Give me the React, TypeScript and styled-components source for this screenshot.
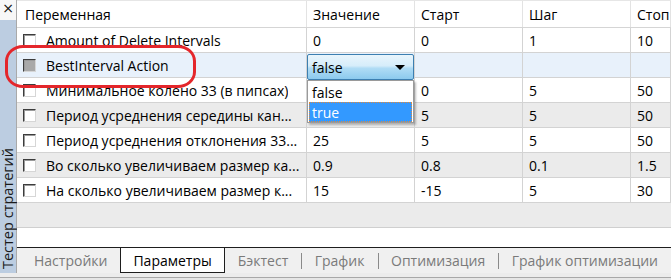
import React from "react";
import styled, { createGlobalStyle } from "styled-components";

type Tone = "white" | "gray" | "selected";

type Param = {
  name: string;
  value?: string;
  start?: string;
  step?: string;
  stop?: string;
  tone: Tone;
  disabled?: boolean;
  combo?: boolean;
};

const params: Param[] = [
  { name: "Amount of Delete Intervals", value: "0", start: "0", step: "1", stop: "10", tone: "white" },
  { name: "BestInterval Action", tone: "selected", disabled: true, combo: true },
  { name: "Минимальное колено 33 (в пипсах)", start: "0", step: "5", stop: "50", tone: "white" },
  { name: "Период усреднения середины кан...", start: "5", step: "5", stop: "50", tone: "gray" },
  { name: "Период усреднения отклонения 33...", value: "25", start: "5", step: "5", stop: "50", tone: "white" },
  { name: "Во сколько увеличиваем размер ка...", value: "0.9", start: "0.8", step: "0.1", stop: "1.5", tone: "gray" },
  { name: "На сколько увеличиваем размер к...", value: "15", start: "-15", step: "5", stop: "30", tone: "white" },
];

const tabs = ["Настройки", "Параметры", "Бэктест", "График", "Оптимизация", "График оптимизации"];
const activeTab = 1;

export default function App() {
  return (
    <Screen>
      <GlobalStyle />
      <Workspace>
        <SideBar>
          <CloseBox>×</CloseBox>
          <SideStrip>
            <SideTitle>Тестер стратегий</SideTitle>
          </SideStrip>
        </SideBar>
        <Main>
          <Header>
            <HeadCell $first>Переменная</HeadCell>
            <HeadCell>Значение</HeadCell>
            <HeadCell>Старт</HeadCell>
            <HeadCell>Шаг</HeadCell>
            <HeadCell>Стоп</HeadCell>
          </Header>
          {params.map((p) => (
            <Row key={p.name} $tone={p.tone}>
              <Cell>
                <Check $disabled={p.disabled} />
                <Name>{p.name}</Name>
              </Cell>
              <Cell>
                {p.combo ? (
                  <>
                    <Combo>
                      <span>false</span>
                      <Arrow />
                    </Combo>
                    <ComboList>
                      <Option>false</Option>
                      <Option $active>true</Option>
                    </ComboList>
                  </>
                ) : (
                  p.value
                )}
              </Cell>
              <Cell>{p.start}</Cell>
              <Cell>{p.step}</Cell>
              <Cell>{p.stop}</Cell>
            </Row>
          ))}
          <EmptyRow />
          <Blank />
          <TabBar>
            {tabs.map((t, i) => (
              <React.Fragment key={t}>
                {i > 0 && i - 1 !== activeTab && i !== activeTab && <TabSeparator />}
                <Tab $active={i === activeTab}>{t}</Tab>
              </React.Fragment>
            ))}
          </TabBar>
        </Main>
      </Workspace>
      <Footer />
      <Highlight />
    </Screen>
  );
}

const GlobalStyle = createGlobalStyle`
  html, body {
    margin: 0;
    padding: 0;
    background: #ffffff;
  }
  body {
    font-family: "Open Sans", "Segoe UI", sans-serif;
    font-size: 14px;
    color: #000000;
  }
`;

const Screen = styled.div`
  position: relative;
  width: 671px;
  height: 280px;
  overflow: hidden;
  display: flex;
  flex-direction: column;
`;

const Workspace = styled.div`
  display: flex;
  height: 273px;
`;

const SideBar = styled.div`
  width: 16px;
  display: flex;
  flex-direction: column;
  border-right: 1px solid #a9a9a9;
`;

const CloseBox = styled.div`
  height: 20px;
  background: #f7f7f7;
  font-family: "DejaVu Sans", sans-serif;
  font-size: 14px;
  line-height: 16px;
  text-align: center;
  color: #111;
`;

const SideStrip = styled.div`
  flex: 1;
  background: #bccde1;
  display: flex;
  flex-direction: column;
  justify-content: flex-end;
  align-items: center;
  padding-bottom: 4px;
`;

const SideTitle = styled.div`
  writing-mode: vertical-rl;
  transform: rotate(180deg);
  font-size: 14.5px;
  line-height: 16px;
  color: #1a1a1a;
  white-space: nowrap;
`;

const Main = styled.div`
  flex: 1;
  display: flex;
  flex-direction: column;
  min-width: 0;
`;

const columns = "290px 108px 108px 108px 1fr";

const Header = styled.div`
  display: grid;
  grid-template-columns: ${columns};
  height: 28px;
  box-sizing: border-box;
  border-top: 1px solid #e6e6e6;
  border-bottom: 1px solid #d5d5d5;
  background: #ffffff;
`;

const HeadCell = styled.div<{ $first?: boolean }>`
  display: flex;
  align-items: center;
  padding-left: ${(p) => (p.$first ? "8px" : "6px")};
  border-right: 1px solid #e3e3e3;
  white-space: nowrap;
  overflow: hidden;
`;

const toneColor: Record<Tone, string> = {
  white: "#ffffff",
  gray: "#ebebeb",
  selected: "#e8f1fb",
};

const Row = styled.div<{ $tone: Tone }>`
  display: grid;
  grid-template-columns: ${columns};
  height: 25px;
  box-sizing: border-box;
  border-bottom: 1px solid #d3d3d3;
  background: ${(p) => toneColor[p.$tone]};
`;

const Cell = styled.div`
  position: relative;
  display: flex;
  align-items: center;
  padding-left: 6px;
  border-right: 1px solid #d3d3d3;
  white-space: nowrap;
  min-width: 0;
`;

const Check = styled.span<{ $disabled?: boolean }>`
  flex: none;
  width: 13px;
  height: 13px;
  box-sizing: border-box;
  margin-right: 10px;
  border: 1px solid;
  border-color: #3c3c3c #d6d6d6 #d6d6d6 #3c3c3c;
  box-shadow: inset 1px 1px 0 #9a9a9a;
  background: ${(p) => (p.$disabled ? "#a9a9a9" : "#ffffff")};
`;

const Name = styled.span`
  overflow: hidden;
`;

const Combo = styled.div`
  position: absolute;
  left: 0;
  top: 1px;
  width: 107px;
  height: 26px;
  box-sizing: border-box;
  padding: 0 6px 0 4px;
  display: flex;
  align-items: center;
  justify-content: space-between;
  border: 1px solid #3c7fb1;
  border-radius: 2px;
  background: linear-gradient(#e9f5fc 0%, #d6edfa 45%, #b0dcf5 55%, #8ccaee 100%);
  z-index: 2;
`;

const Arrow = styled.span`
  width: 0;
  height: 0;
  border-left: 5px solid transparent;
  border-right: 5px solid transparent;
  border-top: 5px solid #000;
  margin-right: 2px;
`;

const ComboList = styled.div`
  position: absolute;
  left: 0;
  top: 27px;
  width: 107px;
  height: 43px;
  box-sizing: border-box;
  padding: 1px;
  background: #ffffff;
  border: 1px solid #9a9a9a;
  box-shadow: 2px 2px 2px rgba(0, 0, 0, 0.25);
  z-index: 3;
`;

const Option = styled.div<{ $active?: boolean }>`
  height: 20px;
  box-sizing: border-box;
  display: flex;
  align-items: center;
  padding-left: 2px;
  background: ${(p) => (p.$active ? "#3399ff" : "transparent")};
  color: ${(p) => (p.$active ? "#ffffff" : "#000000")};
  border: 1px dotted ${(p) => (p.$active ? "#e08a3c" : "transparent")};
`;

const EmptyRow = styled.div`
  height: 25px;
  box-sizing: border-box;
  background: #ebebeb;
  border-bottom: 1px solid #cfcfcf;
`;

const Blank = styled.div`
  flex: 1;
  background: #ffffff;
`;

const TabBar = styled.div`
  height: 26px;
  box-sizing: border-box;
  display: flex;
  align-items: stretch;
  padding-left: 4px;
  border-top: 1px solid #1e1e1e;
  background: #f0f0f0;
`;

const Tab = styled.div<{ $active?: boolean }>`
  display: flex;
  align-items: center;
  padding: 0 12px;
  font-size: 14px;
  white-space: nowrap;
  color: ${(p) => (p.$active ? "#000000" : "#7a7a7a")};
  background: ${(p) => (p.$active ? "#ffffff" : "transparent")};
  border: 1px solid ${(p) => (p.$active ? "#1e1e1e" : "transparent")};
  border-top: none;
`;

const TabSeparator = styled.span`
  align-self: center;
  width: 1px;
  height: 16px;
  background: #8a8a8a;
`;

const Footer = styled.div`
  flex: 1;
  background: linear-gradient(#ececec 0, #ececec 4px, #a8a8a8 4px, #a8a8a8 5px, #e6e6e6 5px);
`;

const Highlight = styled.div`
  position: absolute;
  left: 5px;
  top: 45px;
  width: 191px;
  height: 43px;
  box-sizing: border-box;
  border: 3px solid #e4262b;
  border-radius: 18px / 16px;
  pointer-events: none;
`;
